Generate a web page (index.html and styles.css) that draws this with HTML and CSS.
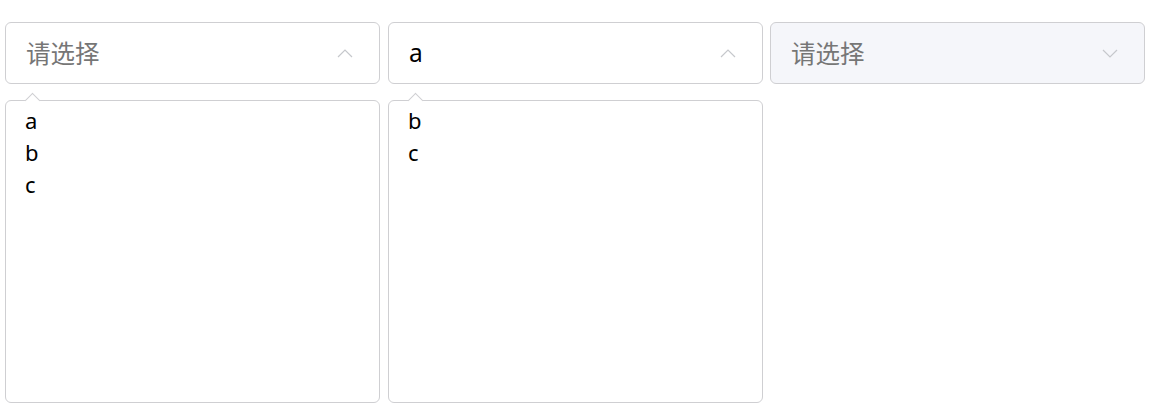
FILE: index.html
```html
<!DOCTYPE html>
<html>
<head>
<meta charset="utf-8">
<link rel="stylesheet" href="styles.css">
</head>
<body>
<div class="row">
  <div class="select open">
    <div class="field"><span class="placeholder">请选择</span>
      <svg class="chev" width="16" height="9" viewBox="0 0 16 9"><path d="M1 8 L8 1 L15 8" fill="none" stroke="#c6c8cc" stroke-width="1.2"/></svg>
    </div>
    <div class="menu">
      <div class="item">a</div>
      <div class="item">b</div>
      <div class="item">c</div>
    </div>
  </div>
  <div class="select open">
    <div class="field"><span class="value">a</span>
      <svg class="chev" width="16" height="9" viewBox="0 0 16 9"><path d="M1 8 L8 1 L15 8" fill="none" stroke="#c6c8cc" stroke-width="1.2"/></svg>
    </div>
    <div class="menu">
      <div class="item">b</div>
      <div class="item">c</div>
    </div>
  </div>
  <div class="select disabled">
    <div class="field"><span class="placeholder">请选择</span>
      <svg class="chev" width="16" height="9" viewBox="0 0 16 9"><path d="M1 1 L8 8 L15 1" fill="none" stroke="#c6c8cc" stroke-width="1.2"/></svg>
    </div>
  </div>
</div>
</body>
</html>
```
FILE: styles.css
```css
html, body { margin: 0; padding: 0; background: #fff; }
body {
  font-family: "Noto Sans CJK SC", "Noto Sans", sans-serif;
  padding: 22px 0 0 5px;
}
.row { display: flex; gap: 8px; align-items: flex-start; }
.select { width: 375px; display: flex; flex-direction: column; }
.field {
  box-sizing: border-box;
  height: 62px;
  border: 1px solid #cfcfd2;
  border-radius: 6px;
  background: #fff;
  display: flex;
  align-items: center;
  padding: 0 26px 2px 20px;
  justify-content: space-between;
  font-size: 24.5px;
}
.disabled .field { background: #f5f6fa; }
.placeholder { color: #767676; }
.value { color: #000; font-family: "Noto Sans", sans-serif; }
.chev { display: block; margin-top: 2px; }
.menu {
  position: relative;
  margin-top: 16px;
  box-sizing: border-box;
  height: 303px;
  border: 1px solid #cfcfd2;
  border-radius: 6px;
  background: #fff;
  padding: 3px 19px;
}
.menu::before {
  content: "";
  position: absolute;
  top: -6px;
  left: 21px;
  width: 10px;
  height: 10px;
  background: #fff;
  border-left: 1px solid #cfcfd2;
  border-top: 1px solid #cfcfd2;
  transform: rotate(45deg);
}
.item {
  font-family: "Noto Sans", sans-serif;
  font-size: 22px;
  line-height: 32px;
  color: #000;
}
.row > .select:nth-child(3) { margin-left: -1px; }
```
